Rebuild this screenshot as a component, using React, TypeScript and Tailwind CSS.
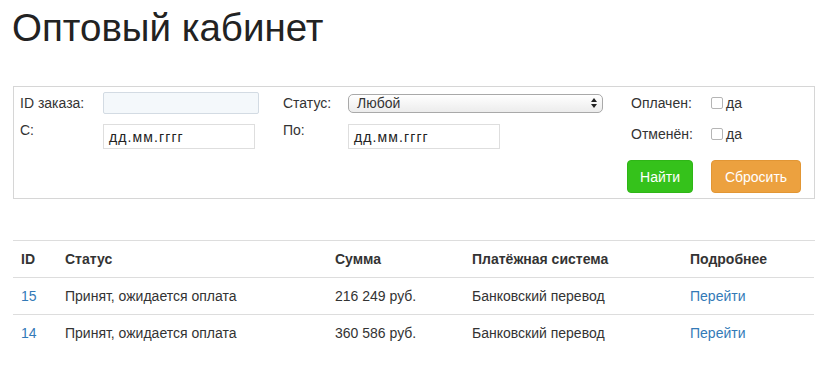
import { Fragment } from 'react';

const orders = [
  { id: '15', status: 'Принят, ожидается оплата', sum: '216 249 руб.', system: 'Банковский перевод' },
  { id: '14', status: 'Принят, ожидается оплата', sum: '360 586 руб.', system: 'Банковский перевод' },
];

function Checkbox() {
  return <span className="inline-block w-[12px] h-[12px] rounded-[2px] border border-[#b5b5b5] bg-white" />;
}

function DateInput({ width }: { width: string }) {
  return (
    <div className={`${width} h-[25px] mt-[4px] border border-[#dedede] bg-white flex items-center pl-[5px] text-[14px] tracking-[1.1px] text-[#222]`}>
      дд.мм.гггг
    </div>
  );
}

export default function App() {
  return (
    <div className="w-[828px] h-[372px] bg-white text-[#333] font-['Liberation_Sans',Arial,sans-serif] text-[14px] leading-[20px] px-[13px] pt-[7px] overflow-hidden">
      <h1 className="text-[38.5px] leading-[42px] text-[#222] -ml-[1px]">Оптовый кабинет</h1>

      {/* Filter panel */}
      <div className="mt-[37px] border border-[#d6d6d6] pl-[6px] pr-[12px] pt-[5px] pb-[5px]">
        <div className="flex items-center h-[22px]">
          <span className="w-[83px]">ID заказа:</span>
          <div className="w-[156px] h-[22px] border border-[#d3dbe3] bg-[#f4f8fb] rounded-[2px]" />
          <span className="ml-[24px] w-[65px]">Статус:</span>
          <div className="w-[255px] h-[19px] rounded-[5px] border border-[#a9a9a9] bg-gradient-to-b from-white to-[#ececec] flex items-center justify-between pl-[8px] pr-[4px] text-[14px]">
            <span>Любой</span>
            <svg width="8" height="12" viewBox="0 0 8 12">
              <path d="M4 1 L7 5 L1 5 Z" fill="#222" />
              <path d="M4 11 L7 7 L1 7 Z" fill="#222" />
            </svg>
          </div>
          <span className="ml-[28px] w-[80px]">Оплачен:</span>
          <div className="flex items-center gap-[3px]">
            <Checkbox />
            <span>да</span>
          </div>
        </div>

        <div className="flex items-start mt-[6px]">
          <span className="w-[83px]">С:</span>
          <DateInput width="w-[152px]" />
          <span className="ml-[28px] w-[65px]">По:</span>
          <DateInput width="w-[152px]" />
          <span className="ml-[131px] w-[80px] mt-[4px]">Отменён:</span>
          <div className="flex items-center gap-[3px] mt-[4px]">
            <Checkbox />
            <span>да</span>
          </div>
        </div>

        <div className="flex justify-end gap-[18px] mt-[11px] pr-px">
          <button className="w-[66px] h-[33px] rounded-[4px] bg-[#35c21b] border border-[#2fb617] text-white text-[14px]">
            Найти
          </button>
          <button className="w-[90px] h-[33px] rounded-[4px] bg-[#eca13f] border border-[#e29634] text-white text-[14px]">
            Сбросить
          </button>
        </div>
      </div>

      {/* Orders table */}
      <div className="mt-[41px] grid grid-cols-[44px_270px_137px_218px_132px] border-t border-[#dddddd]">
        {['ID', 'Статус', 'Сумма', 'Платёжная система', 'Подробнее'].map((h) => (
          <div key={h} className="px-[8px] py-[8px] font-bold border-b border-[#dddddd]">
            {h}
          </div>
        ))}
        {orders.map((o, i) => {
          const line = i < orders.length - 1 ? 'border-b border-[#dddddd]' : '';
          return (
            <Fragment key={o.id}>
              <div className={`px-[8px] py-[8px] text-[#337ab7] ${line}`}>{o.id}</div>
              <div className={`px-[8px] py-[8px] ${line}`}>{o.status}</div>
              <div className={`px-[8px] py-[8px] ${line}`}>{o.sum}</div>
              <div className={`px-[8px] py-[8px] ${line}`}>{o.system}</div>
              <div className={`px-[8px] py-[8px] text-[#337ab7] ${line}`}>Перейти</div>
            </Fragment>
          );
        })}
      </div>
    </div>
  );
}
